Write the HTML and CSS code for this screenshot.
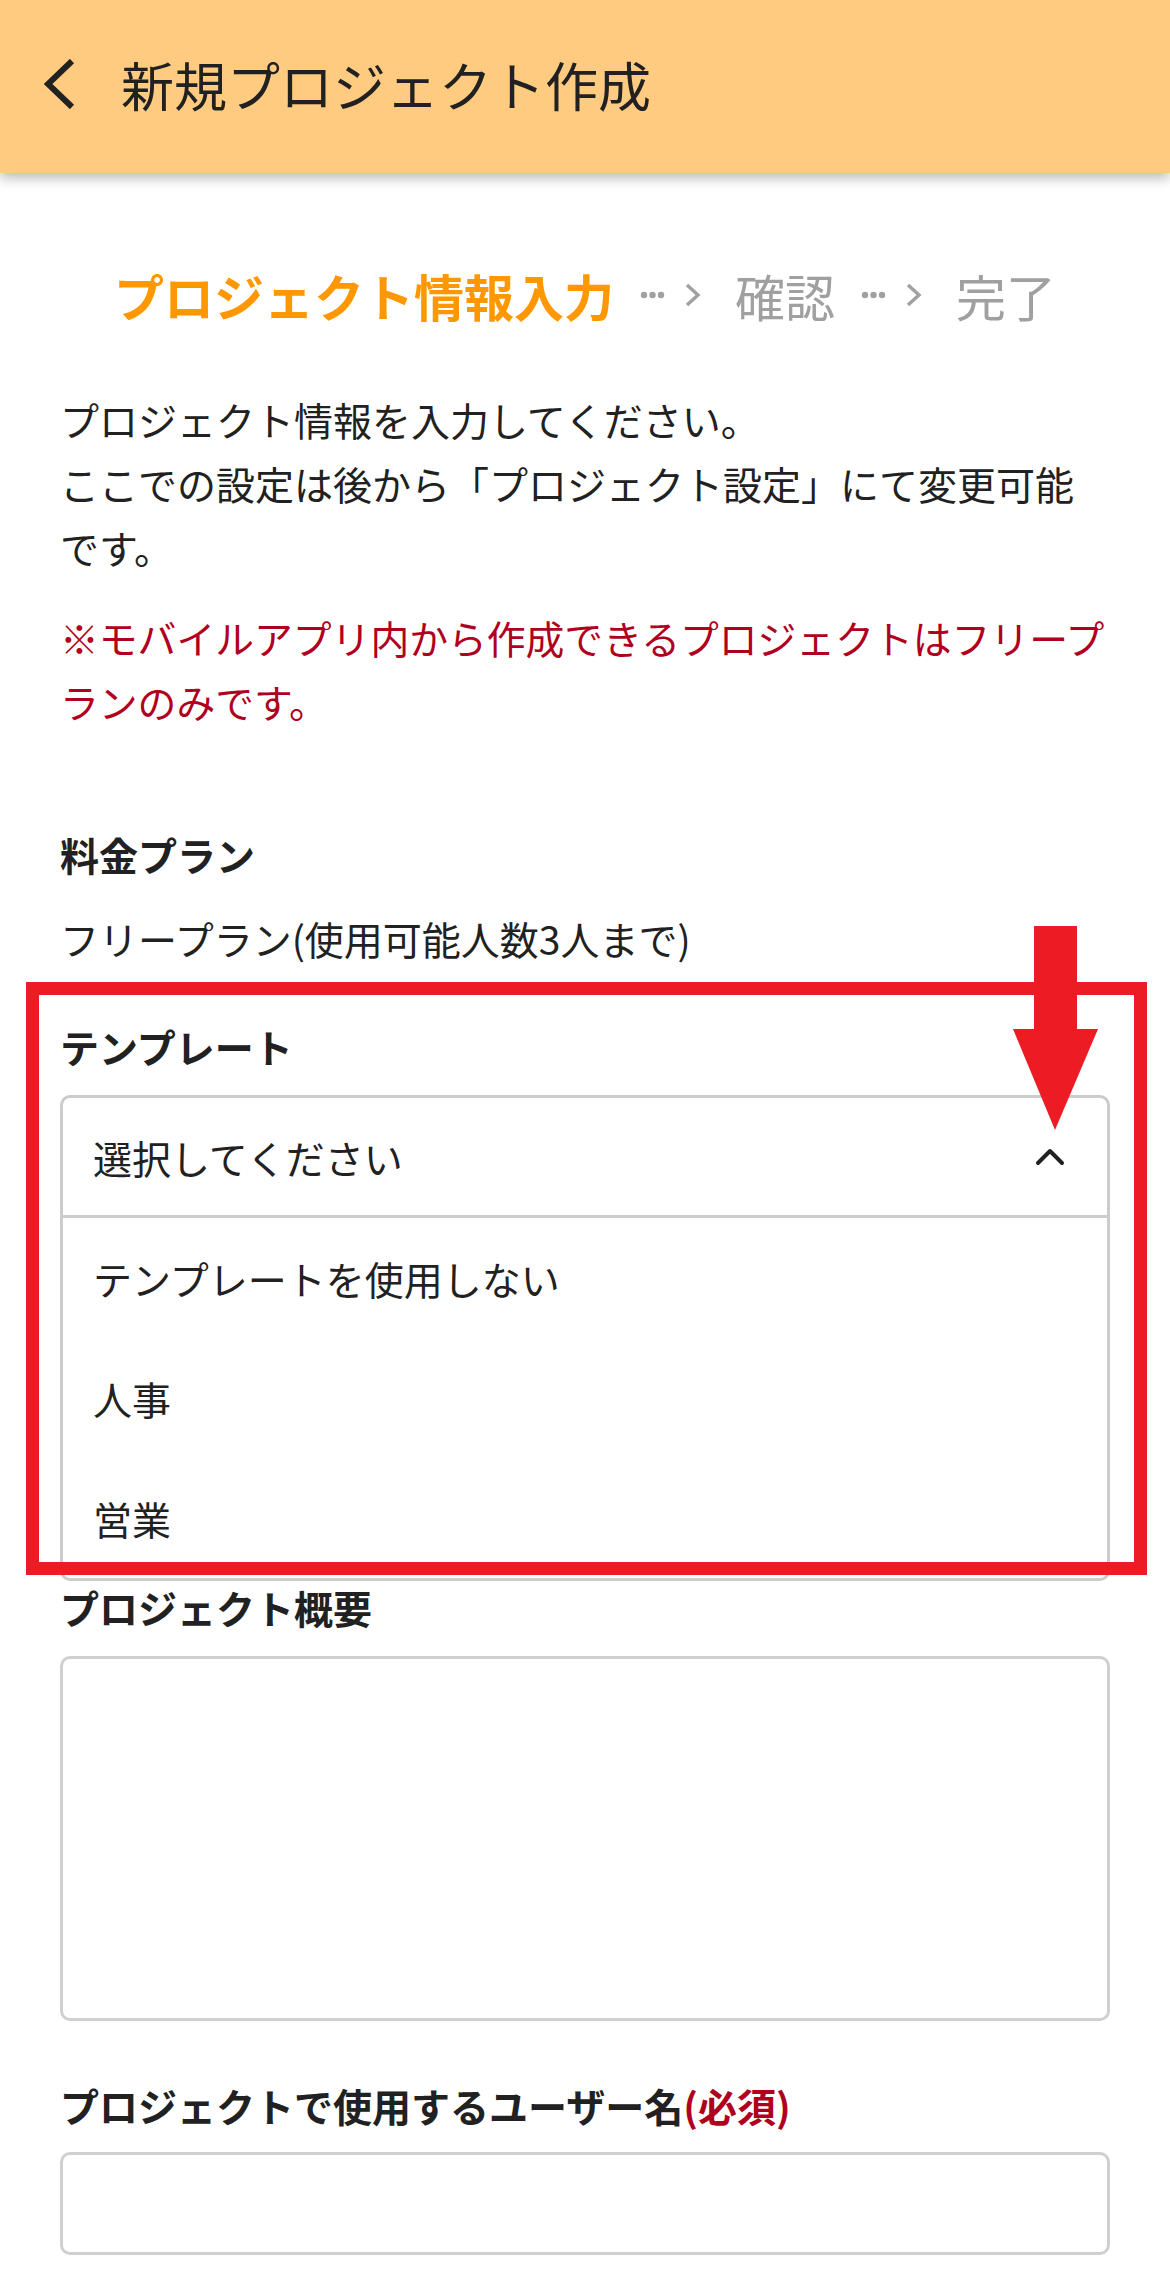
FILE: index.html
```html
<!DOCTYPE html>
<html lang="ja">
<head>
    <meta charset="UTF-8">
    <meta name="viewport" content="width=device-width, initial-scale=1.0">
    <title>新規プロジェクト作成</title>
    <link rel="stylesheet" href="styles.css">
</head>
<body>

    <!-- App bar -->
    <header class="app-bar">
        <svg class="back-icon" width="32" height="50" viewBox="0 0 32 50">
            <polyline points="28,2 4,25 28,48" fill="none" stroke="#212121" stroke-width="6"/>
        </svg>
        <h1>新規プロジェクト作成</h1>
    </header>

    <main class="content">

        <!-- Steps -->
        <div class="steps">
            <span class="step current">プロジェクト情報入力</span>
            <svg class="step-arrow" width="62" height="24" viewBox="0 0 62 24">
                <circle cx="4" cy="12" r="3.2" fill="#A0A0A0"/>
                <circle cx="12.5" cy="12" r="3.2" fill="#A0A0A0"/>
                <circle cx="21" cy="12" r="3.2" fill="#A0A0A0"/>
                <polyline points="47,2 58,12 47,22" fill="none" stroke="#A0A0A0" stroke-width="3.4"/>
            </svg>
            <span class="step">確認</span>
            <svg class="step-arrow" width="62" height="24" viewBox="0 0 62 24">
                <circle cx="4" cy="12" r="3.2" fill="#A0A0A0"/>
                <circle cx="12.5" cy="12" r="3.2" fill="#A0A0A0"/>
                <circle cx="21" cy="12" r="3.2" fill="#A0A0A0"/>
                <polyline points="47,2 58,12 47,22" fill="none" stroke="#A0A0A0" stroke-width="3.4"/>
            </svg>
            <span class="step">完了</span>
        </div>

        <p class="intro">プロジェクト情報を入力してください。<br>ここでの設定は後から「プロジェクト設定」にて変更可能です。</p>
        <p class="notice">※モバイルアプリ内から作成できるプロジェクトはフリープランのみです。</p>

        <!-- Plan -->
        <div class="field plan-field">
            <div class="label">料金プラン</div>
            <div class="value">フリープラン(使用可能人数3人まで)</div>
        </div>

        <!-- Template -->
        <div class="field template-field">
            <div class="label">テンプレート</div>
            <div class="select open">
                <div class="select-head">
                    <span>選択してください</span>
                    <svg class="select-caret" width="30" height="18" viewBox="0 0 30 18">
                        <polyline points="3,15 15,3 27,15" fill="none" stroke="#212121" stroke-width="4" stroke-linecap="round" stroke-linejoin="round"/>
                    </svg>
                </div>
                <ul class="select-options">
                    <li>テンプレートを使用しない</li>
                    <li>人事</li>
                    <li>営業</li>
                </ul>
            </div>
            <div class="highlight"></div>
            <svg class="pointer" width="85" height="204" viewBox="0 0 85 204">
                <rect x="21" y="0" width="43" height="104" fill="#ED1C24"/>
                <polygon points="0,103 85,103 42,204" fill="#ED1C24"/>
            </svg>
        </div>

        <!-- Summary -->
        <div class="field summary-field">
            <div class="label">プロジェクト概要</div>
            <textarea class="textarea"></textarea>
        </div>

        <!-- User name -->
        <div class="field user-field">
            <div class="label">プロジェクトで使用するユーザー名<span class="required">(必須)</span></div>
            <input class="text-input" type="text">
        </div>

    </main>

</body>
</html>
```

FILE: styles.css
```css
/* Basic Reset */
* { margin: 0; padding: 0; box-sizing: border-box; }

body {
    font-family: "Noto Sans CJK JP", "Noto Sans", sans-serif;
    color: #212121;
    background-color: #FFFFFF;
}

/* App bar */
.app-bar {
    height: 173px;
    background-color: #FFCB80;
    display: flex;
    align-items: center;
    padding: 0 0 6px 44px;
    box-shadow: 0 5px 12px rgba(0, 0, 0, 0.28);
    position: relative;
}
.app-bar h1 {
    font-size: 53px;
    font-weight: 400;
    margin-left: 45px;
    color: #212121;
}

/* Content */
.content {
    padding: 0 60px 40px;
}

/* Steps */
.steps {
    margin-top: 92px;
    display: flex;
    justify-content: center;
    align-items: center;
    font-size: 50px;
    line-height: 60px;
    color: #A0A0A0;
}
.step.current {
    color: #FF9800;
    font-weight: 700;
}
.step-arrow {
    margin: 0 33px 0 26px;
}

/* Intro texts */
.intro {
    margin-top: 62px;
    font-size: 39px;
    line-height: 64px;
}
.notice {
    margin-top: 26px;
    font-size: 38.8px;
    line-height: 64px;
    color: #B00020;
}

/* Fields */
.label {
    font-size: 39px;
    line-height: 52px;
    font-weight: 700;
}
.label .required {
    color: #B00020;
}
.plan-field { margin-top: 95px; }
.value {
    margin-top: 26px;
    font-size: 39px;
    line-height: 64px;
}

.template-field {
    margin-top: 50px;
    position: relative;
}

/* Select */
.select {
    margin-top: 23px;
    border: 3px solid #CCCCCC;
    border-radius: 10px;
    font-size: 39px;
}
.select-head {
    height: 120px;
    display: flex;
    justify-content: space-between;
    align-items: center;
    padding: 0 42px 0 30px;
    border-bottom: 3px solid #CCCCCC;
}
.select-caret { display: block; }
.select-options { list-style: none; }
.select-options li {
    height: 120px;
    display: flex;
    align-items: center;
    padding-left: 30px;
}

/* Annotation overlay */
.highlight {
    position: absolute;
    top: -38px;
    left: -34px;
    right: -37px;
    bottom: 6px;
    border: 13px solid #ED1C24;
    pointer-events: none;
}
.pointer {
    position: absolute;
    left: 953px;
    top: -94px;
}

/* Textarea and input */
.summary-field { margin-top: 0; }
.user-field { margin-top: 58px; }
.textarea, .text-input {
    display: block;
    width: 100%;
    margin-top: 23px;
    border: 3px solid #D0D0D0;
    border-radius: 10px;
    font-family: inherit;
    font-size: 39px;
    resize: none;
    outline: none;
}
.textarea { height: 365px; }
.text-input { height: 103px; margin-top: 21px; }
```
